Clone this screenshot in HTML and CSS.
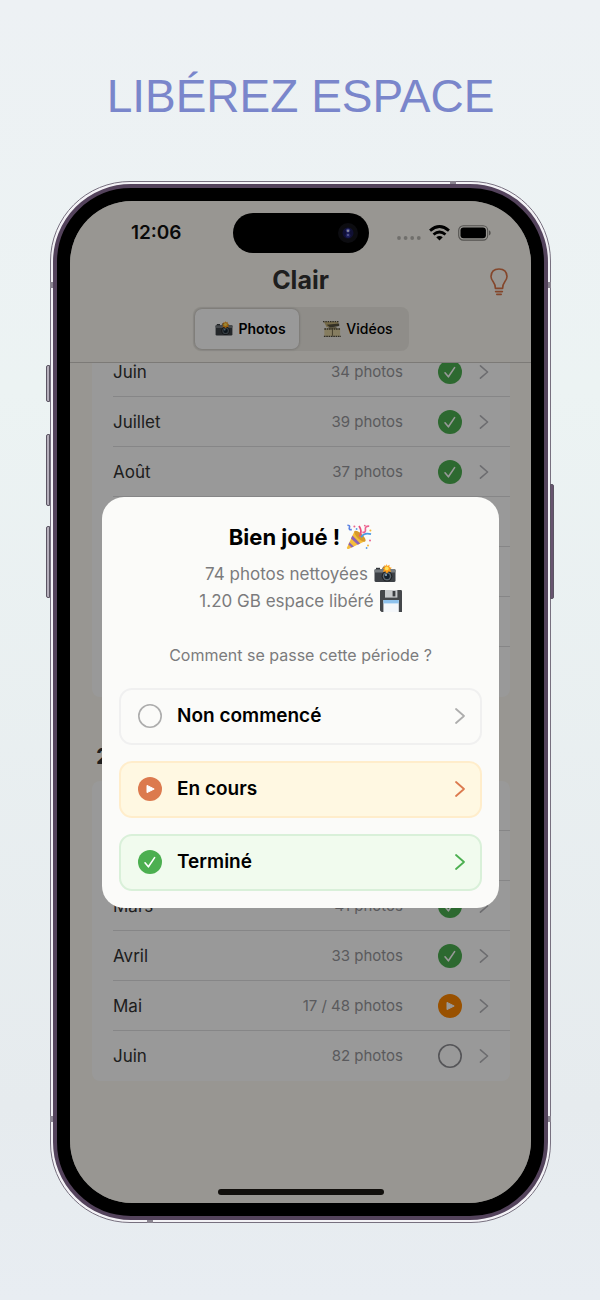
FILE: index.html
```html
<!DOCTYPE html>
<html lang="fr">
<head>
<meta charset="utf-8">
<meta name="viewport" content="width=device-width, initial-scale=1">
<title>Clair</title>
<link rel="stylesheet" href="styles.css">
</head>
<body>
<svg class="defs" aria-hidden="true">
  <symbol id="chevron" viewBox="0 0 12 18"><path d="M2 2l8 7-8 7" fill="none" stroke="currentColor" stroke-width="1.8" stroke-linecap="round" stroke-linejoin="round"/></symbol>
  <symbol id="done" viewBox="0 0 24 24"><circle cx="12" cy="12" r="12" fill="currentColor"/><path d="M7 12.8l3.4 4L16.6 7.6" fill="none" stroke="#fff" stroke-width="1.6" stroke-linecap="round" stroke-linejoin="round"/></symbol>
  <symbol id="play" viewBox="0 0 24 24"><circle cx="12" cy="12" r="12" fill="currentColor"/><path d="M9 8.400v7.200l7.200-3.600z" fill="#fff" stroke="#fff" stroke-width="1" stroke-linejoin="round"/></symbol>
  <symbol id="empty" viewBox="0 0 24 24"><circle cx="12" cy="12" r="11.2" fill="none" stroke="currentColor" stroke-width="1.600"/></symbol>
  <symbol id="camera" viewBox="0 0 22 20">
    <rect x="0.5" y="5" width="21" height="13" rx="1.5" fill="#3d4146"/>
    <rect x="0.5" y="5" width="21" height="3.6" rx="1" fill="#777c80"/>
    <rect x="2" y="3.8" width="4" height="1.6" fill="#33373b"/>
    <path d="M8 5l1.4-2.4h5.4L16.4 5z" fill="#52565a"/>
    <circle cx="13" cy="12.2" r="5.4" fill="#202326"/>
    <circle cx="13" cy="12.2" r="4.2" fill="#5d6870"/>
    <circle cx="13" cy="12.2" r="2.8" fill="#15222d"/>
    <circle cx="12" cy="11" r="1" fill="#93b7cf"/>
    <path d="M12.4 0l1.1 2 2.1-1.2-.3 2.5 2.5.5-1.8 1.7 1.2 2.2-2.6-.3-1.8 2-1.3-2-2.6.4 1.2-2.4L8.2 3.8l2.4-.6-.3-2.3 1.8 1.2z" fill="#ff9d16"/>
    <circle cx="12.8" cy="4.4" r="1.9" fill="#ffe25a"/>
  </symbol>
  <symbol id="film" viewBox="0 0 20 20">
    <path d="M1 2h16v4.600L4 8z" fill="#c7b47c"/>
    <path d="M0 1.800h18" stroke="#4b4636" stroke-width="1.300" stroke-dasharray="1.6 1"/>
    <path d="M4 5.200l14-1.200v2.600L8 8.200z" fill="#55503f"/>
    <path d="M6 8h9v2H6z" fill="#8b7f57"/>
    <rect x="1.500" y="9.500" width="17.500" height="8.500" fill="#dfd0a0"/>
    <path d="M1.500 10h18M1 18.200h19" stroke="#4b4636" stroke-width="1.400" stroke-dasharray="1.8 .8"/>
    <path d="M10.5 10.500v7" stroke="#6b6143" stroke-width="1"/>
  </symbol>
  <symbol id="floppy" viewBox="0 0 22 22">
    <path d="M0 1.2Q0 0 1.2 0h19.6Q22 0 22 1.2V22H1.6L0 20.4z" fill="#44474b"/>
    <rect x="5" y="0" width="12.4" height="7.6" fill="#c7cacd"/>
    <rect x="12.6" y="1" width="2.8" height="5.4" fill="#3b3e42"/>
    <rect x="3.4" y="10" width="15.4" height="12" fill="#f4f7fa"/>
    <path d="M3.4 10h15.4v3.4H3.4z" fill="#8fc3ee"/>
  </symbol>
  <symbol id="party" viewBox="0 0 26 26">
    <path d="M8.6 7L1 23.4q-.4 2 1.6 1.6L19.4 17z" fill="#f5bd3b"/>
    <path d="M6.4 11.6L5 14.600l6.800 6.200 2.400-1.200z" fill="#8d63b5"/>
    <path d="M3.400 18.200l-1 2.200 3.200 3.200 2.200-1z" fill="#8d63b5"/>
    <ellipse cx="14" cy="12.2" rx="2.8" ry="7.4" transform="rotate(-46 14 12.2)" fill="#d79a2a"/>
    <path d="M13.4 12.4q3.4-5-.4-10.4" fill="none" stroke="#e94f7c" stroke-width="1.8"/>
    <path d="M15.2 13.2q3-5 9.8-3" fill="none" stroke="#489be6" stroke-width="1.8"/>
    <path d="M16.4 8.4q3.6.4 3-3t3.8-3.2" fill="none" stroke="#ed6291" stroke-width="1.7"/>
    <path d="M1.4 1.2q3 0 2 2.4t2.4 2" fill="none" stroke="#5c82e3" stroke-width="1.6"/>
    <g fill="#e9638c"><circle cx="8.4" cy="2.4" r="1"/><circle cx="24" cy="16.4" r="1"/><circle cx="18.8" cy="1.6" r=".9"/></g>
    <g fill="#f3b73b"><circle cx="24.4" cy="6.6" r="1"/><circle cx="22" cy="21.6" r="1"/></g>
    <g fill="#5b9be6"><circle cx="10.6" cy="5" r=".9"/><circle cx="20.6" cy="24" r=".9"/></g>
  </symbol>
</svg>

<div class="poster">
  <h1 class="headline">LIBÉREZ ESPACE</h1>

  <div class="phone">
    <span class="key key-mute"></span>
    <span class="key key-up"></span>
    <span class="key key-down"></span>
    <span class="key key-power"></span>
    <span class="band band-top"></span>
    <span class="band band-left"></span>
    <span class="band band-right"></span>
    <span class="band band-low-left"></span>
    <span class="band band-low-right"></span>
    <span class="band band-bottom"></span>
    <div class="bezel">
      <div class="screen">
        <header class="top">
          <div class="status">
            <span class="time">12:06</span>
            <span class="island"><svg viewBox="0 0 22 22"><circle cx="11" cy="11" r="10" fill="#14141c"/><circle cx="11" cy="11" r="5.5" fill="#1c1c58"/><circle cx="11" cy="8.6" r="2.200" fill="#4c50c8"/><circle cx="11" cy="13.4" r="2.400" fill="#3438a0"/><circle cx="11" cy="8.8" r="1.200" fill="#e6e8ff"/><circle cx="11" cy="13" r=".9" fill="#a8acff"/></svg></span>
            <span class="signals">
              <svg class="dots" viewBox="0 0 24 4"><g fill="#bbb9b4"><circle cx="2" cy="2" r="1.9"/><circle cx="8.6" cy="2" r="1.9"/><circle cx="15.2" cy="2" r="1.9"/><circle cx="21.8" cy="2" r="1.9"/></g></svg>
              <svg class="wifi" viewBox="0 0 20 15"><g fill="none" stroke="#000" stroke-width="2.7"><path d="M1 5.2q9-7.8 18 0"/><path d="M4.3 8.9q5.7-4.8 11.4 0"/></g><path d="M6.9 11.5q3.1-2.5 6.2 0L10 14.7z"/></svg>
              <svg class="battery" viewBox="0 0 33 16"><rect x=".7" y=".7" width="29" height="14.4" rx="4.6" fill="none" stroke="#8a8884" stroke-width="1.1"/><rect x="2.5" y="2.5" width="25.4" height="10.8" rx="3"/><path d="M31 5.3q1.7.8 1.7 2.6T31 10.5z" fill="#8a8884"/></svg>
            </span>
          </div>
          <div class="titlebar">
            <h2 class="app-title">Clair</h2>
            <button class="tips" type="button" aria-label="Astuces">
              <svg viewBox="0 0 18 28"><g fill="none" stroke="#dc7648" stroke-width="1.600" stroke-linecap="round" stroke-linejoin="round"><path d="M5.400 20.400q0-3.6-2.200-6.6Q1 10.800 1 8.400 1.400 1 9 1t8 7.400q0 2.400-2.200 5.400-2.200 3-2.200 6.600z"/><path d="M5.600 23.600h6.800M6.800 26.400h4.400"/></g></svg>
            </button>
          </div>
          <div class="segments">
            <button class="segment active" type="button"><svg class="camera-sm"><use href="#camera"/></svg>Photos</button>
            <button class="segment" type="button"><svg class="film-sm"><use href="#film"/></svg>Vidéos</button>
          </div>
        </header>

        <main class="list">
          <ul class="months first">
            <li class="month"><span class="name">Juin</span><span class="count">34 photos</span><svg class="state green"><use href="#done"/></svg><svg class="chevron"><use href="#chevron"/></svg></li>
            <li class="month"><span class="name">Juillet</span><span class="count">39 photos</span><svg class="state green"><use href="#done"/></svg><svg class="chevron"><use href="#chevron"/></svg></li>
            <li class="month"><span class="name">Août</span><span class="count">37 photos</span><svg class="state green"><use href="#done"/></svg><svg class="chevron"><use href="#chevron"/></svg></li>
            <li class="month"></li>
            <li class="month"></li>
            <li class="month"></li>
            <li class="month"></li>
          </ul>
          <h3 class="year">2025</h3>
          <ul class="months">
            <li class="month"></li>
            <li class="month"></li>
            <li class="month"><span class="name">Mars</span><span class="count">41 photos</span><svg class="state green"><use href="#done"/></svg><svg class="chevron"><use href="#chevron"/></svg></li>
            <li class="month"><span class="name">Avril</span><span class="count">33 photos</span><svg class="state green"><use href="#done"/></svg><svg class="chevron"><use href="#chevron"/></svg></li>
            <li class="month"><span class="name">Mai</span><span class="count">17 / 48 photos</span><svg class="state orange"><use href="#play"/></svg><svg class="chevron"><use href="#chevron"/></svg></li>
            <li class="month"><span class="name">Juin</span><span class="count">82 photos</span><svg class="state grey"><use href="#empty"/></svg><svg class="chevron"><use href="#chevron"/></svg></li>
          </ul>
        </main>
        <div class="home"></div>

        <div class="scrim">
          <section class="dialog" role="dialog" aria-labelledby="dialog-title">
            <h2 class="dialog-title" id="dialog-title">Bien joué !<svg class="party"><use href="#party"/></svg></h2>
            <p class="stat">74 photos nettoyées<svg class="emoji"><use href="#camera"/></svg></p>
            <p class="stat">1.20 GB espace libéré<svg class="emoji"><use href="#floppy"/></svg></p>
            <p class="question">Comment se passe cette période ?</p>
            <div class="choices">
              <button class="choice" type="button"><svg class="state"><use href="#empty"/></svg><span class="label">Non commencé</span><svg class="chevron"><use href="#chevron"/></svg></button>
              <button class="choice progress" type="button"><svg class="state"><use href="#play"/></svg><span class="label">En cours</span><svg class="chevron"><use href="#chevron"/></svg></button>
              <button class="choice complete" type="button"><svg class="state"><use href="#done"/></svg><span class="label">Terminé</span><svg class="chevron"><use href="#chevron"/></svg></button>
            </div>
          </section>
        </div>
      </div>
    </div>
  </div>
</div>
</body>
</html>
```
FILE: styles.css
```css
* { box-sizing: border-box; }
body { margin: 0; font-family: Inter, "Liberation Sans", sans-serif; background: #e7ecf0; }
h1, h2, h3, p, ul { margin: 0; padding: 0; }
ul { list-style: none; }
button { font: inherit; color: inherit; border: 0; background: none; padding: 0; }
svg { display: block; flex: none; }
.defs { position: absolute; width: 0; height: 0; }

.poster {
  min-height: 100vh;
  padding: 68px 49px 76px 50px;
  background: linear-gradient(#edf1f4, #ecf3f3 30%, #e6ebee 85%, #e8edf2);
}
.headline {
  font: 400 46px/56px "Liberation Sans", Arial, sans-serif;
  color: #7a86cb;
  text-align: center;
  margin-bottom: 57px;
}

/* Device */
.phone {
  position: relative;
  padding: 2px;
  border: 1px solid #77707f;
  border-radius: 80px;
  background: #f3f2f6;
}
.bezel {
  padding: 13px;
  border: 4px solid #54435c;
  border-radius: 78px;
  background: #000;
}
.screen {
  position: relative;
  display: flex;
  flex-direction: column;
  overflow: hidden;
  border-radius: 62px;
  background: #fdfaf3;
  color: #111;
}
.key { position: absolute; left: -5px; width: 4px; height: 72px; border: 1px solid #5b5563; background: #b5afbb; border-radius: 2px 0 0 2px; }
.key-mute { top: 183px; height: 37px; }
.key-up { top: 252px; }
.key-down { top: 344px; }
.key-power { left: auto; right: -4px; top: 302px; height: 115px; background: #67546f; border-radius: 0 2px 2px 0; }
.band { position: absolute; width: 3px; height: 6px; background: #8a8490; }
.band-top { top: -1px; right: 94px; width: 6px; height: 3px; }
.band-left { top: 100px; left: -1px; }
.band-right { top: 100px; right: -1px; }
.band-low-left { bottom: 100px; left: -1px; }
.band-low-right { bottom: 100px; right: -1px; }
.band-bottom { bottom: -1px; left: 96px; width: 6px; height: 3px; }

/* Header */
.top { padding: 12px 18px 11px; border-bottom: 1px solid #cfccc6; }
.status { display: grid; grid-template-columns: 1fr 136px 1fr; align-items: center; height: 40px; }
.time { font-size: 19px; font-weight: 600; line-height: 24px; text-align: right; padding-right: 51px; }
.island { display: flex; align-items: center; justify-content: flex-end; height: 40px; padding-right: 10px; border-radius: 20px; background: #000; }
.island svg { width: 22px; height: 22px; }
.signals { display: flex; align-items: center; justify-content: flex-end; gap: 8px; padding-right: 22px; }
.dots { width: 24px; height: 4px; margin-top: 10px; }
.wifi { width: 21px; height: 16px; }
.battery { width: 33px; height: 16px; }
.titlebar { display: grid; grid-template-columns: 1fr auto 1fr; align-items: center; height: 54px; }
.app-title { grid-column: 2; font-size: 25px; font-weight: 700; line-height: 32px; color: #333; }
.tips { justify-self: end; padding: 4px 5px 0; }
.tips svg { width: 18px; height: 28px; }
.segments { display: grid; grid-template-columns: 104px 1fr; width: 216px; height: 44px; margin: 0 auto; padding: 2px; border-radius: 8px; background: #efece5; }
.segment { display: flex; align-items: center; justify-content: center; gap: 5px; padding-left: 11px; font-size: 14px; font-weight: 500; line-height: 20px; border-radius: 7px; color: #000; }
.segment.active { padding-left: 8px; font-weight: 600; background: #fff; box-shadow: 0 0 3px rgba(0, 0, 0, .3); }
.camera-sm { width: 18px; height: 16px; }
.film-sm { width: 18px; height: 18px; }

/* Month list */
.list { overflow: hidden; padding: 0 21px 108px 22px; }
.months { border-radius: 8px; background: #fff; }
.months.first { margin-top: -16px; }
.month { display: flex; align-items: center; height: 50px; margin-left: 21px; padding-right: 20px; border-bottom: 1px solid #e0e0e2; }
.month:last-child { border-bottom: 0; }
.name { flex: 1; font-size: 17px; line-height: 24px; color: #333; }
.count { font-size: 15px; line-height: 24px; color: #97979b; margin-right: 35px; }
.state { width: 24px; height: 24px; }
.month .chevron { width: 12px; height: 16px; margin-left: 16px; color: #b5b5ba; }
.green { color: #4caf50; }
.orange { color: #ff8800; }
.grey { color: #8e8e93; }
.year { font-size: 22px; line-height: 28px; padding: 45px 4px 11px; color: #333; }
.home { height: 6px; width: 166px; margin: 0 auto 8px; border-radius: 3px; background: #1d1a14; }

/* Dialog */
.scrim { position: absolute; inset: 0; display: flex; align-items: center; padding: 0 32px; background: rgba(0, 0, 0, .4); }
.dialog { flex: 1; padding: 24px 17px 17px; border-radius: 22px; background: #fbfbf9; text-align: center; }
.dialog-title { display: flex; align-items: center; justify-content: center; gap: 6px; font-size: 22px; font-weight: 700; line-height: 32px; color: #000; margin-bottom: 8px; }
.party { width: 26px; height: 26px; }
.stat { display: flex; align-items: center; justify-content: center; gap: 6px; font-size: 17px; line-height: 27px; color: #7b7b7d; }
.emoji { width: 22px; height: 22px; }
.question { font-size: 16px; line-height: 27px; color: #7b7b7d; padding: 27px 0 19px; }
.choices { display: grid; gap: 16px; }
.choice { display: flex; align-items: center; height: 57px; padding: 0 14px 0 17px; border: 2px solid #f0f0f0; border-radius: 13px; color: #adadad; }
.choice .label { flex: 1; margin-left: 15px; font-size: 19px; font-weight: 600; line-height: 24px; text-align: left; color: #000; }
.choice .chevron { width: 12px; height: 18px; }
.choice.progress { background: #fff8e2; border-color: #ffedcb; color: #dc7a4e; }
.choice.complete { background: #f1fbee; border-color: #d9f0d9; color: #4caf50; }
```
